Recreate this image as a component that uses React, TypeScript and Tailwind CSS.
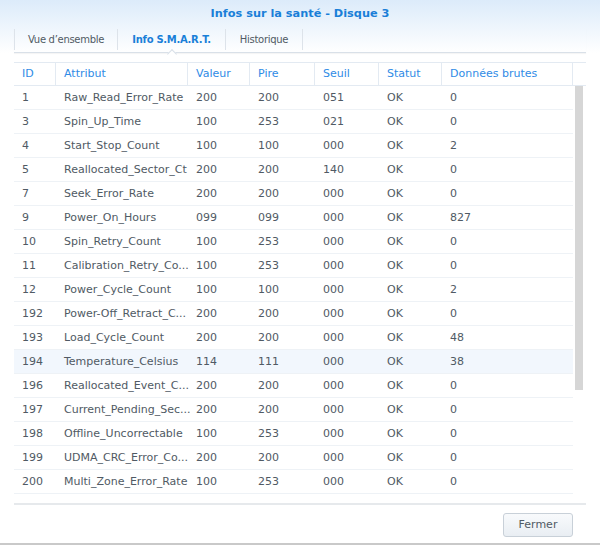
const rows = [
  ["1", "Raw_Read_Error_Rate", "200", "200", "051", "OK", "0"],
  ["3", "Spin_Up_Time", "100", "253", "021", "OK", "0"],
  ["4", "Start_Stop_Count", "100", "100", "000", "OK", "2"],
  ["5", "Reallocated_Sector_Ct", "200", "200", "140", "OK", "0"],
  ["7", "Seek_Error_Rate", "200", "200", "000", "OK", "0"],
  ["9", "Power_On_Hours", "099", "099", "000", "OK", "827"],
  ["10", "Spin_Retry_Count", "100", "253", "000", "OK", "0"],
  ["11", "Calibration_Retry_Co...", "100", "253", "000", "OK", "0"],
  ["12", "Power_Cycle_Count", "100", "100", "000", "OK", "2"],
  ["192", "Power-Off_Retract_C...", "200", "200", "000", "OK", "0"],
  ["193", "Load_Cycle_Count", "200", "200", "000", "OK", "48"],
  ["194", "Temperature_Celsius", "114", "111", "000", "OK", "38"],
  ["196", "Reallocated_Event_C...", "200", "200", "000", "OK", "0"],
  ["197", "Current_Pending_Sec...", "200", "200", "000", "OK", "0"],
  ["198", "Offline_Uncorrectable", "100", "253", "000", "OK", "0"],
  ["199", "UDMA_CRC_Error_Co...", "200", "200", "000", "OK", "0"],
  ["200", "Multi_Zone_Error_Rate", "100", "253", "000", "OK", "0"],
];

const headers = ["ID", "Attribut", "Valeur", "Pire", "Seuil", "Statut", "Données brutes"];
const cols = "grid grid-cols-[42px_132px_62px_65px_64px_63px_131px]";

export default function App() {
  return (
    <div className="relative h-[545px] w-[600px] overflow-hidden bg-white font-['DejaVu_Sans',sans-serif] text-[11px] text-[#505a64]">
      <div className="bg-gradient-to-b from-[#dcebfa] to-white pt-[7px]">
        <div className="text-center text-[11.3px] font-bold leading-[14px] text-[#1a7fd8]">
          Infos sur la santé - Disque 3
        </div>
        {/* Tabs */}
        <div className="relative mx-[14px] mt-[7px] flex h-[25px] items-start border-b border-[#d9e0e8] pt-[1px] text-[10px] tracking-[-0.3px] shadow-[0_1px_1px_rgba(0,0,0,0.04)]">
          <div className="flex h-[21px] w-[104px] items-center justify-center border-x border-[#dde3ea] text-[#505a64]">Vue d’ensemble</div>
          <div className="relative flex h-[24px] w-[108px] items-start font-bold text-[#1a7fd8]">
            <div className="flex h-[21px] w-full items-center justify-center border-r border-[#dde3ea]">Info S.M.A.R.T.</div>
            <span className="absolute bottom-[-1px] left-[54px] h-[7px] w-[7px] -translate-x-1/2 translate-y-1/2 rotate-45 border-l border-t border-[#d9e0e8] bg-white" />
          </div>
          <div className="flex h-[21px] w-[77px] items-center justify-center border-r border-[#dde3ea] text-[#505a64]">Historique</div>
        </div>
      </div>

      {/* Table */}
      <div className="relative mx-[14px] mt-[9px] h-[443px] border-b-2 border-[#e6e9ec]">
        <div className={`${cols} h-[24px] border-y border-[#e3eaf2] text-[#2f8be6]`}>
          {headers.map((h) => (
            <div key={h} className="flex items-center border-r border-[#e3eaf2] px-[8px] pt-[1px]">
              {h}
            </div>
          ))}
        </div>
        {rows.map((r) => (
          <div
            key={r[0]}
            className={`${cols} h-[24px] w-[559px] border-b border-[#eef2f6] ${r[0] === "194" ? "bg-[#f2f7fd]" : ""}`}
          >
            {r.map((c, i) => (
              <div key={i} className="flex items-center whitespace-nowrap px-[8px] pt-[2px]">
                {c}
              </div>
            ))}
          </div>
        ))}
        <div className="absolute left-[561px] top-[24px] h-[304px] w-[8px] bg-[#d6d6d6]" />
      </div>

      {/* Footer */}
      <div className="flex justify-end px-[27px] pt-[8px]">
        <button className="h-[24px] w-[70px] rounded-[3px] border border-[#c8d0d8] bg-gradient-to-b from-[#f8fafc] to-[#e9eef3] text-[11px] text-[#505a64]">
          Fermer
        </button>
      </div>
      <div className="absolute bottom-0 left-0 h-[2px] w-full bg-[#c9c9c9]" />
    </div>
  );
}
